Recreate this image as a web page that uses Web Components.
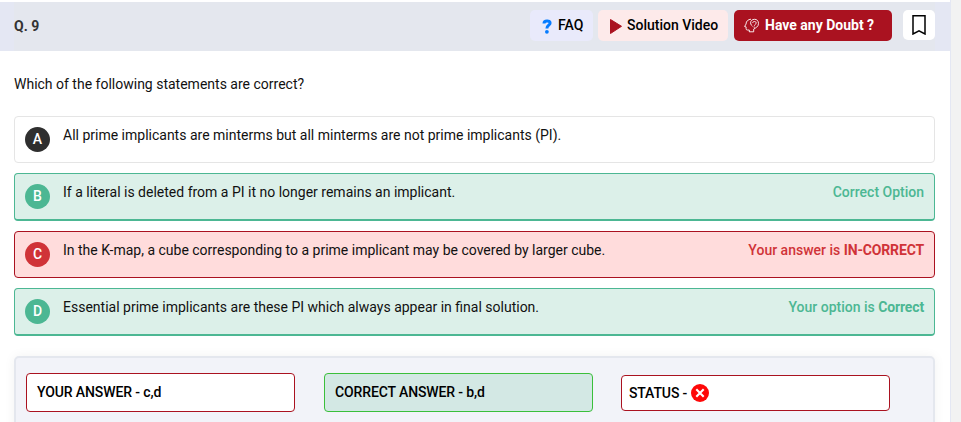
<!DOCTYPE html>
<html lang="en">
<head>
<meta charset="utf-8">
<title>Question 9</title>
<style>
body { margin: 0; background: #f2f2f2; font: 14px/20px Roboto, sans-serif; color: #111; height: 422px; overflow: hidden; }
</style>
</head>
<body>
<question-page></question-page>
<script>
function define(name, html) {
  const t = document.createElement('template');
  t.innerHTML = html;
  customElements.define(name, class extends HTMLElement {
    constructor() {
      super();
      this.attachShadow({ mode: 'open' }).append(t.content.cloneNode(true));
    }
  });
}

define('tool-button', `<style>
:host { display: flex; box-sizing: border-box; height: 31px; border-radius: 5px; align-items: center; white-space: nowrap; font-weight: 500; color: #000; }
span { padding-bottom: 1px; }
:host([kind=faq]) { width: 63px; background: #e9eafb; padding-left: 12px; gap: 6px; }
:host([kind=video]) { width: 130px; background: #fdeaea; padding-left: 12px; gap: 5px; margin-left: 5px; }
:host([kind=doubt]) { width: 158px; background: #aa1220; color: #fff; padding-left: 10px; gap: 6px; margin-left: 6px; font-weight: 700; }
:host([kind=mark]) { width: 32px; height: 30px; background: #fff; margin-left: 11px; justify-content: center; }
</style><slot name="icon"></slot><span><slot></slot></span>`);

define('question-header', `<style>
:host { display: flex; box-sizing: border-box; height: 49px; background: linear-gradient(90deg, #e4e7f3 14px, #e4e7ee 14px, #e4e7ee 935px, #e4e7f3 935px); padding: 8px 15px 0 14px; }
b { flex: 1; line-height: 32px; color: #333; }
svg { display: block; flex: none; }
</style>
<b>Q. 9</b>
<tool-button kind="faq"><svg slot="icon" width="10" height="16" viewBox="0 0 10 16"><path d="M2 5.4C2 2.3 8.1 2 8.1 5c0 2.2-3.2 2.2-3.2 5.4" fill="none" stroke="#067cff" stroke-width="3"/><circle cx="4.9" cy="13.8" r="1.9" fill="#067cff"/></svg>FAQ</tool-button>
<tool-button kind="video"><svg slot="icon" width="12" height="16" viewBox="0 0 12 16"><path d="M.5 1.5 11.5 8.3 .5 15.5Z" fill="#aa1220" stroke="#aa1220" stroke-linejoin="round"/></svg>Solution Video</tool-button>
<tool-button kind="doubt"><svg slot="icon" width="15" height="15" viewBox="0 0 15 15" fill="none" stroke="#fff" stroke-width=".9"><path d="M5.3 14V12H3.3Q2.1 12 2.1 10.7V8.9L.6 8.5 2 6.1C2.1 3 4.2 1.4 7 1.2"/><path d="M9.7 13.8H5.3M9.7 13.8V11.1C11.4 10 14.5 8.8 14.5 5.5 14.5 2.8 12.8 1.3 10.6 1.3 8.2 1.3 6.6 2.8 6.6 4.8 6.6 7 8 7.4 8.8 8.5"/><path d="M8.7 5C8.7 2.9 12.3 3 12.2 5.1 12.1 6.3 10.5 6.4 10.4 7.7M9.7 9.2H10.8"/></svg>Have any Doubt ?</tool-button>
<tool-button kind="mark"><svg slot="icon" width="14" height="20" viewBox="0 0 14 20"><path d="M1 .8H13V19L7 15.8 1 19Z" fill="none" stroke="#000" stroke-width="1.5"/></svg></tool-button>`);

define('answer-option', `<style>
:host { display: flex; box-sizing: border-box; height: 47px; border: 1px solid #e5e5e5; border-radius: 4px; background: #fff; padding: 8px 10px 0; margin-bottom: 10px; white-space: nowrap; }
:host([state=right]) { height: 48px; border-color: #4cb793; border-bottom-width: 2px; background: #dcf0e9; }
:host([state=wrong]) { border-color: #aa1220; background: #ffdcdc; }
.badge { display: block; box-sizing: border-box; width: 25px; height: 25px; margin: 2px 13px 0 0; border-radius: 50%; background: #2f2f2f; color: #fff; text-align: center; line-height: 25px; font-weight: 500; }
:host([state=right]) .badge { background: #4cb793; }
:host([state=wrong]) .badge { background: #d03338; }
.text { flex: 1; }
.result { color: #4cb793; font-weight: 500; }
:host([state=wrong]) .result { color: #d03338; }
</style>
<span class="badge"><slot name="letter"></slot></span><span class="text"><slot></slot></span><span class="result"><slot name="result"></slot></span>`);

define('answer-box', `<style>
:host { display: flex; box-sizing: border-box; width: 269px; height: 39px; border: 1px solid #aa1220; border-radius: 4px; background: #fff; padding: 0 0 1px 10px; align-items: center; font-weight: 500; color: #000; letter-spacing: -.12px; white-space: pre; }
:host([kind=correct]) { background: #d3e8e4; border-color: #3bbf3b; }
:host([kind=status]) { height: 36px; margin-top: 2px; padding-left: 7px; }
</style><slot></slot>`);

define('answer-summary', `<style>
:host { display: grid; box-sizing: border-box; height: 100px; margin-top: 20px; border: 2px solid #e4e7ee; border-radius: 5px; background: #f2f3f9; padding: 15px 10px; grid-template-columns: 298px 297px 269px; align-items: start; box-shadow: 0 0 12px rgba(0,0,0,.055); }
svg { margin-left: 4px; }
</style>
<answer-box>YOUR ANSWER - c,d</answer-box><answer-box kind="correct">CORRECT ANSWER - b,d</answer-box><answer-box kind="status">STATUS -<svg width="18" height="18" viewBox="0 0 18 18"><circle cx="9" cy="9" r="9" fill="#fe0808"/><path d="M5.3 5.3 12.7 12.7M12.7 5.3 5.3 12.7" stroke="#fff" stroke-width="2.1"/></svg></answer-box>`);

define('question-page', `<style>
:host { display: block; box-sizing: border-box; width: 951px; height: 422px; overflow: hidden; padding-top: 2px; background: #fff; border-right: 1px solid #e4e7f3; }
main { display: block; padding: 23px 15px 0 14px; }
p { margin: 0 0 22px; }
b { letter-spacing: -.15px; }
</style>
<question-header></question-header>
<main><p>Which of the following statements are correct?</p>
<answer-option><span slot="letter">A</span>All prime implicants are minterms but all minterms are not prime implicants (PI).</answer-option>
<answer-option state="right"><span slot="letter">B</span>If a literal is deleted from a PI it no longer remains an implicant.<span slot="result">Correct Option</span></answer-option>
<answer-option state="wrong"><span slot="letter">C</span>In the K-map, a cube corresponding to a prime implicant may be covered by larger cube.<span slot="result">Your answer is <b>IN-CORRECT</b></span></answer-option>
<answer-option state="right"><span slot="letter">D</span>Essential prime implicants are these PI which always appear in final solution.<span slot="result">Your option is <b>Correct</b></span></answer-option>
<answer-summary></answer-summary></main>`);
</script>
</body>
</html>
